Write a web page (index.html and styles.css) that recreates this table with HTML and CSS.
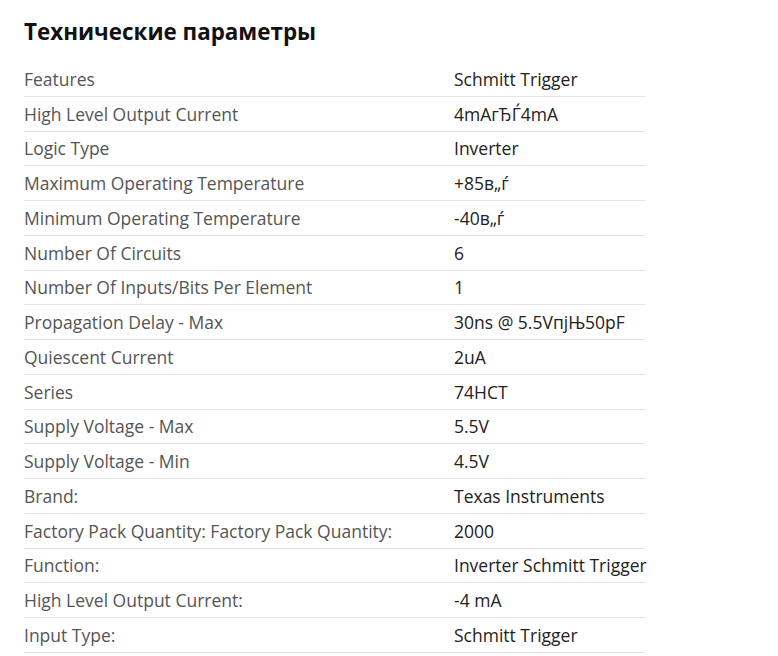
FILE: index.html
```html
<!DOCTYPE html>
<html lang="ru">
<head>
<meta charset="utf-8">
<link rel="stylesheet" href="styles.css">
</head>
<body>
<div class="wrap">
  <h2 class="title">Технические параметры</h2>
  <div class="specs">
    <div class="row"><div class="k">Features</div><div class="v">Schmitt Trigger</div></div>
    <div class="row"><div class="k">High Level Output Current</div><div class="v">4mAгЂЃ4mA</div></div>
    <div class="row"><div class="k">Logic Type</div><div class="v">Inverter</div></div>
    <div class="row"><div class="k">Maximum Operating Temperature</div><div class="v">+85в„ѓ</div></div>
    <div class="row"><div class="k">Minimum Operating Temperature</div><div class="v">-40в„ѓ</div></div>
    <div class="row"><div class="k">Number Of Circuits</div><div class="v">6</div></div>
    <div class="row"><div class="k">Number Of Inputs/Bits Per Element</div><div class="v">1</div></div>
    <div class="row"><div class="k">Propagation Delay - Max</div><div class="v">30ns @ 5.5VпјЊ50pF</div></div>
    <div class="row"><div class="k">Quiescent Current</div><div class="v">2uA</div></div>
    <div class="row"><div class="k">Series</div><div class="v">74HCT</div></div>
    <div class="row"><div class="k">Supply Voltage - Max</div><div class="v">5.5V</div></div>
    <div class="row"><div class="k">Supply Voltage - Min</div><div class="v">4.5V</div></div>
    <div class="row"><div class="k">Brand:</div><div class="v">Texas Instruments</div></div>
    <div class="row"><div class="k">Factory Pack Quantity: Factory Pack Quantity:</div><div class="v">2000</div></div>
    <div class="row"><div class="k">Function:</div><div class="v">Inverter Schmitt Trigger</div></div>
    <div class="row"><div class="k">High Level Output Current:</div><div class="v">-4 mA</div></div>
    <div class="row"><div class="k">Input Type:</div><div class="v">Schmitt Trigger</div></div>
  </div>
</div>
</body>
</html>
```

FILE: styles.css
```css
html, body {
  margin: 0;
  padding: 0;
  background: #fff;
}
body {
  font-family: "Open Sans", "Noto Sans", sans-serif;
}
.wrap {
  padding: 15px 24px 0 24px;
  width: 622px;
}
.title {
  margin: 0 0 13px 0;
  font-size: 22.4px;
  font-weight: 700;
  line-height: 34px;
  color: #111;
}
.specs {
  display: flex;
  flex-direction: column;
}
.row {
  display: grid;
  grid-template-columns: 430px 192px;
  border-bottom: 1px solid #e3e3e3;
  height: 34.75px;
  box-sizing: border-box;
  align-items: center;
  font-size: 17.5px;
}
.k {
  color: #555;
  white-space: nowrap;
}
.v {
  color: #222;
  white-space: nowrap;
}
```
